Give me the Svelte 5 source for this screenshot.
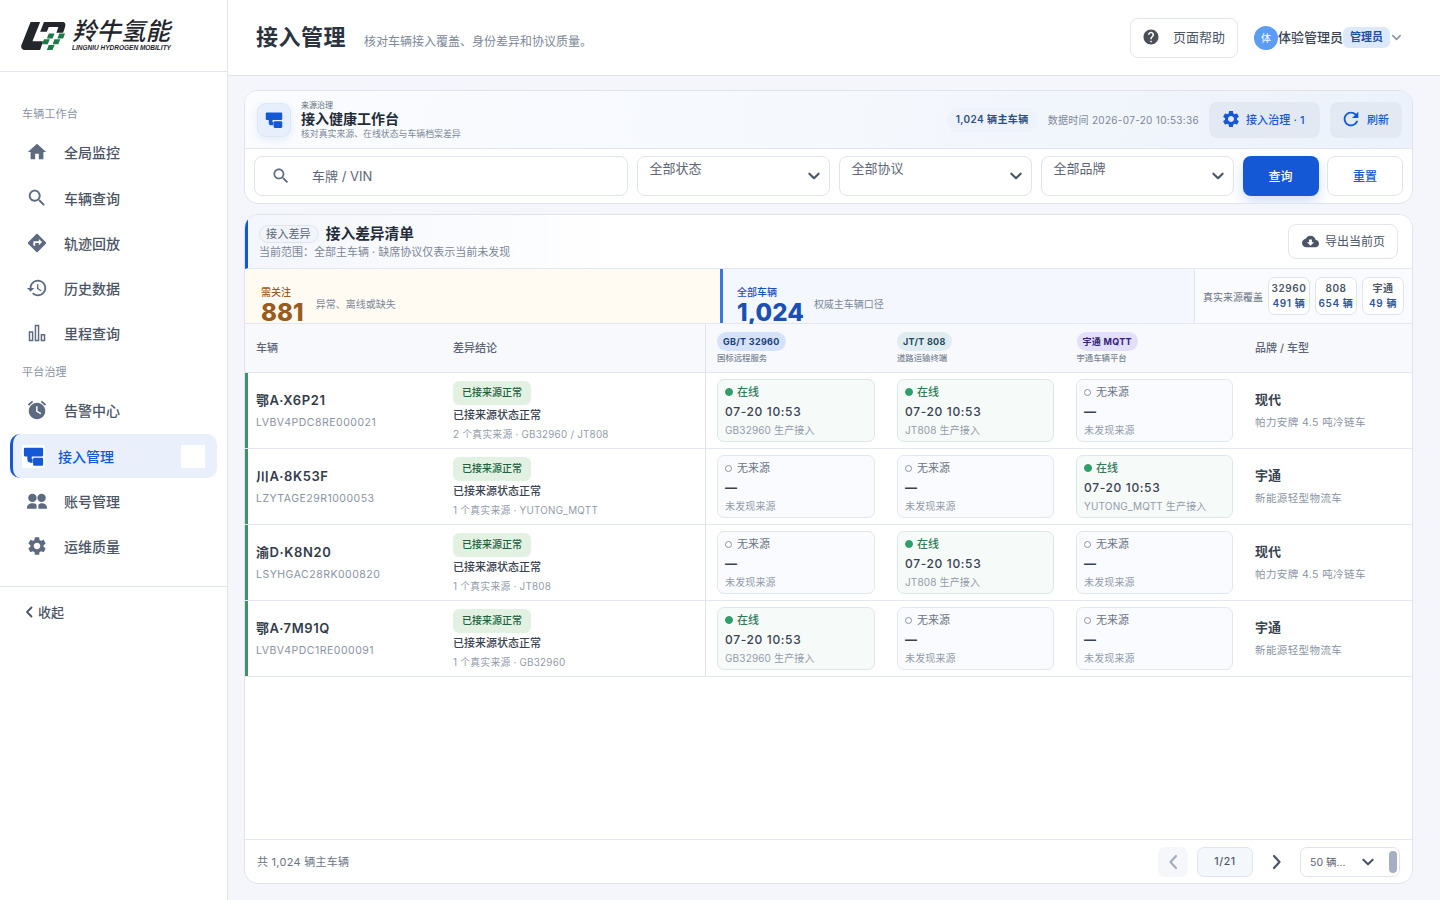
<script lang="ts">
  type Src = { on: boolean; sub: string };
  type Row = { plate: string; vin: string; meta: string; srcs: Src[]; brand: string; model: string };

  const icons: Record<string, string> = {
    home: 'M10 20v-6h4v6h5v-8h3L12 3 2 12h3v8z',
    search: 'M15.5 14h-.79l-.28-.27C15.41 12.59 16 11.11 16 9.5 16 5.91 13.09 3 9.5 3S3 5.91 3 9.5 5.91 16 9.5 16c1.61 0 3.09-.59 4.23-1.57l.27.28v.79l5 4.99L20.49 19l-4.99-5zm-6 0C7.01 14 5 11.99 5 9.5S7.01 5 9.5 5 14 7.01 14 9.5 11.99 14 9.5 14z',
    route: 'M21.71 11.29l-9-9c-.39-.39-1.02-.39-1.41 0l-9 9c-.39.39-.39 1.02 0 1.41l9 9c.39.39 1.02.39 1.41 0l9-9c.39-.38.39-1.01 0-1.41zM14 14.5V12h-4v3H8v-4c0-.55.45-1 1-1h5V7.5l3.5 3.5-3.5 3.5z',
    history: 'M13 3c-4.97 0-9 4.03-9 9H1l3.89 3.89.07.14L9 12H6c0-3.87 3.13-7 7-7s7 3.13 7 7-3.13 7-7 7c-1.93 0-3.68-.79-4.94-2.06l-1.42 1.42C8.27 19.99 10.51 21 13 21c4.97 0 9-4.03 9-9s-4.03-9-9-9zm-1 5v5l4.28 2.54.72-1.21-3.5-2.08V8H12z',
    bars: 'M3 10h5v11H3zM4.6 11.6v7.8h1.8v-7.8zM9.5 3h5v18h-5zM11.1 4.6v14.8h1.8V4.6zM16 13h5v8h-5zM17.6 14.6v4.8h1.8v-4.8z',
    alarm: 'M22 5.72l-4.6-3.86-1.29 1.53 4.6 3.86L22 5.72zM7.88 3.39L6.6 1.86 2 5.71l1.29 1.53 4.59-3.85zM12 4c-4.97 0-9 4.03-9 9s4.03 9 9 9 9-4.03 9-9-4.03-9-9-9zm3.9 12.7L11 13.8V8h1.6v5l4.1 2.4z',
    access: 'M2.5 2h19A1.5 1.5 0 0 1 23 3.5v7a1.5 1.5 0 0 1-1.500 1.500H10v2.500h1V19H8.500A3.500 3.500 0 0 1 5 15.500V12H2.500A1.500 1.500 0 0 1 1 10.500v-7A1.500 1.500 0 0 1 2.500 2zM13 13.500h8.500A1.500 1.500 0 0 1 23 15v6a1.500 1.500 0 0 1-1.500 1.500H13a1.500 1.500 0 0 1-1.500-1.500v-6a1.500 1.500 0 0 1 1.500-1.500z',
    group: 'M7 4a4.600 4.600 0 1 1 0 9.200A4.600 4.600 0 0 1 7 4zm10 0a4.600 4.600 0 1 1 0 9.200A4.600 4.600 0 0 1 17 4zM1 20c0-3.600 2.700-5.500 6-5.500 1.700 0 3.500.5 4.500 1.700V20.500H1.500A.5.5 0 0 1 1 20zm12.500.5v-4.300c1-1.200 2.700-1.700 3.500-1.700 3.300 0 6 1.900 6 5.500a.5.5 0 0 1-.5.5z',
    gear: 'M19.14 12.94c.04-.3.06-.61.06-.94 0-.32-.02-.64-.07-.94l2.03-1.58c.18-.14.23-.41.12-.61l-1.92-3.32c-.12-.22-.37-.29-.59-.22l-2.39.96c-.5-.38-1.03-.7-1.62-.94l-.36-2.54c-.04-.24-.24-.41-.48-.41h-3.84c-.24 0-.43.17-.47.41l-.36 2.54c-.59.24-1.13.57-1.62.94l-2.39-.96c-.22-.08-.47 0-.59.22L2.74 8.87c-.12.21-.08.47.12.61l2.03 1.58c-.05.3-.09.63-.09.94s.02.64.07.94l-2.03 1.58c-.18.14-.23.41-.12.61l1.92 3.32c.12.22.37.29.59.22l2.39-.96c.5.38 1.03.7 1.62.94l.36 2.54c.05.24.24.41.48.41h3.84c.24 0 .44-.17.47-.41l.36-2.54c.59-.24 1.13-.56 1.62-.94l2.39.96c.22.08.47 0 .59-.22l1.92-3.32c.12-.22.07-.47-.12-.61l-2.01-1.58zM12 15.6c-1.98 0-3.6-1.62-3.6-3.6s1.62-3.6 3.6-3.6 3.6 1.62 3.6 3.6-1.62 3.6-3.6 3.6z',
    help: 'M12 2C6.48 2 2 6.48 2 12s4.48 10 10 10 10-4.48 10-10S17.52 2 12 2zm1 17h-2v-2h2v2zm2.07-7.75l-.9.92C13.45 12.9 13 13.5 13 15h-2v-.5c0-1.1.45-2.1 1.17-2.83l1.24-1.26c.37-.36.59-.86.59-1.41 0-1.1-.9-2-2-2s-2 .9-2 2H8c0-2.21 1.79-4 4-4s4 1.79 4 4c0 .88-.36 1.68-.93 2.25z',
    refresh: 'M17.65 6.35C16.2 4.9 14.21 4 12 4c-4.42 0-7.99 3.58-7.99 8s3.57 8 7.99 8c3.73 0 6.84-2.55 7.73-6h-2.08c-.82 2.33-3.04 4-5.65 4-3.31 0-6-2.69-6-6s2.69-6 6-6c1.66 0 3.14.69 4.22 1.78L13 11h7V4l-2.35 2.35z',
    cloud: 'M19.35 10.04C18.67 6.59 15.64 4 12 4 9.11 4 6.6 5.64 5.35 8.04 2.34 8.36 0 10.91 0 14c0 3.31 2.69 6 6 6h13c2.76 0 5-2.24 5-5 0-2.64-2.05-4.78-4.65-4.96zM17 13l-5 5-5-5h3V9h4v4h3z',
  };

  const workbench = [
    { icon: 'home', label: '全局监控' },
    { icon: 'search', label: '车辆查询' },
    { icon: 'route', label: '轨迹回放' },
    { icon: 'history', label: '历史数据' },
    { icon: 'bars', label: '里程查询' },
  ];

  const platform = [
    { icon: 'alarm', label: '告警中心' },
    { icon: 'access', label: '接入管理', active: true },
    { icon: 'group', label: '账号管理' },
    { icon: 'gear', label: '运维质量' },
  ];

  const on = (sub: string): Src => ({ on: true, sub });
  const off: Src = { on: false, sub: '未发现来源' };

  const rows: Row[] = [
    { plate: '鄂A·X6P21', vin: 'LVBV4PDC8RE000021', meta: '2 个真实来源 · GB32960 / JT808', srcs: [on('GB32960 生产接入'), on('JT808 生产接入'), off], brand: '现代', model: '帕力安牌 4.5 吨冷链车' },
    { plate: '川A·8K53F', vin: 'LZYTAGE29R1000053', meta: '1 个真实来源 · YUTONG_MQTT', srcs: [off, off, on('YUTONG_MQTT 生产接入')], brand: '宇通', model: '新能源轻型物流车' },
    { plate: '渝D·K8N20', vin: 'LSYHGAC28RK000820', meta: '1 个真实来源 · JT808', srcs: [off, on('JT808 生产接入'), off], brand: '现代', model: '帕力安牌 4.5 吨冷链车' },
    { plate: '鄂A·7M91Q', vin: 'LVBV4PDC1RE000091', meta: '1 个真实来源 · GB32960', srcs: [on('GB32960 生产接入'), off, off], brand: '宇通', model: '新能源轻型物流车' },
  ];

  const filters = ['全部状态', '全部协议', '全部品牌'];

  const sources = [
    { tag: 'GB/T 32960', sub: '国标远程服务', cls: 'blue' },
    { tag: 'JT/T 808', sub: '道路运输终端', cls: 'teal' },
    { tag: '宇通 MQTT', sub: '宇通车辆平台', cls: 'purple' },
  ];

  const coverage = [
    { name: '32960', count: '491 辆' },
    { name: '808', count: '654 辆' },
    { name: '宇通', count: '49 辆' },
  ];
</script>

{#snippet icon(name: string, size: number)}
  <svg class="ic" width={size} height={size} viewBox="0 0 24 24" aria-hidden="true"><path fill="currentColor" fill-rule={name === 'bars' ? 'evenodd' : undefined} d={icons[name]} /></svg>
{/snippet}

{#snippet chevron(size: number)}
  <svg class="chev" width={size} height={size} viewBox="0 0 12 12" aria-hidden="true"><path d="M2 4l4 4 4-4" fill="none" stroke="currentColor" stroke-width="1.800" stroke-linecap="round" stroke-linejoin="round" /></svg>
{/snippet}

<div class="app">
  <aside class="sidebar">
    <div class="logo">
      <svg class="logo-mark" width="45" height="30" viewBox="0 0 47 31" aria-hidden="true">
        <path fill="#23262b" d="M10 1h10L12 21h11l-3 9H4c-3 0-4.500-2-3.500-5z" />
        <path fill="#23262b" d="M24 1h19c3 0 4 2 3 5l-2 6h-7l2-6H29l-2 5h-7z" />
        <path fill="#1d7a48" d="M29 13h6l-2 5h-6zM40 13h6l-2 5h-6zM24 19h6l-2 5h-6zM35 19h6l-2 5h-6zM29 25h6l-2 5h-6z" />
      </svg>
      <div class="logo-text">
        <div class="logo-cn">羚牛氢能</div>
        <div class="logo-en">LINGNIU HYDROGEN MOBILITY</div>
      </div>
    </div>

    <nav class="nav">
      <div class="nav-label">车辆工作台</div>
      {#each workbench as item}
        <div class="nav-item">{@render icon(item.icon, 22)}<span>{item.label}</span></div>
      {/each}
      <div class="nav-label second">平台治理</div>
      {#each platform as item}
        <div class="nav-item" class:active={item.active}>
          {#if item.active}
            <span class="active-icon">{@render icon(item.icon, 21)}</span>
          {:else}
            {@render icon(item.icon, 22)}
          {/if}
          <span>{item.label}</span>
          {#if item.active}<span class="active-box"></span>{/if}
        </div>
      {/each}
    </nav>

    <div class="collapse">
      <svg width="10" height="12" viewBox="0 0 10 12" aria-hidden="true"><path d="M7.500 1.500L3 6l4.500 4.500" fill="none" stroke="currentColor" stroke-width="1.800" stroke-linecap="round" stroke-linejoin="round" /></svg>
      <span>收起</span>
    </div>
  </aside>

  <div class="main">
    <header class="topbar">
      <h1>接入管理</h1>
      <p>核对车辆接入覆盖、身份差异和协议质量。</p>
      <button class="help" type="button">{@render icon('help', 18)}<span>页面帮助</span></button>
      <div class="user">
        <span class="avatar">体</span>
        <span class="user-name">体验管理员</span>
        <span class="role">管理员</span>
        {@render chevron(11)}
      </div>
    </header>

    <div class="content">
      <section class="card filter-card">
        <div class="work-head">
          <span class="work-icon">{@render icon('access', 18)}</span>
          <div class="work-titles">
            <div class="eyebrow">来源治理</div>
            <div class="work-title">接入健康工作台</div>
            <div class="work-sub">核对真实来源、在线状态与车辆档案差异</div>
          </div>
          <span class="total-pill">1,024 辆主车辆</span>
          <span class="data-time">数据时间 2026-07-20 10:53:36</span>
          <button class="soft wide" type="button">{@render icon('gear', 20)}<span>接入治理 · 1</span></button>
          <button class="soft narrow" type="button">{@render icon('refresh', 22)}<span>刷新</span></button>
        </div>
        <div class="filters">
          <div class="search">{@render icon('search', 20)}<span>车牌 / VIN</span></div>
          {#each filters as f}
            <div class="select"><span>{f}</span>{@render chevron(14)}</div>
          {/each}
          <button class="primary" type="button">查询</button>
          <button class="reset" type="button">重置</button>
        </div>
      </section>

      <section class="card list-card">
        <div class="list-head">
          <div class="list-titles">
            <div class="list-line">
              <span class="list-tag">接入差异</span>
              <span class="list-title">接入差异清单</span>
            </div>
            <div class="list-sub">当前范围：全部主车辆 · 缺席协议仅表示当前未发现</div>
          </div>
          <button class="export" type="button">{@render icon('cloud', 17)}<span>导出当前页</span></button>
        </div>

        <div class="stats">
          <div class="stat warn">
            <div>
              <div class="stat-label">需关注</div>
              <div class="stat-num">881</div>
            </div>
            <span class="stat-note">异常、离线或缺失</span>
          </div>
          <div class="stat info">
            <div>
              <div class="stat-label">全部车辆</div>
              <div class="stat-num">1,024</div>
            </div>
            <span class="stat-note">权威主车辆口径</span>
          </div>
          <div class="coverage">
            <span class="coverage-label">真实来源覆盖</span>
            {#each coverage as c}
              <div class="coverage-chip"><div>{c.name}</div><div class="count">{c.count}</div></div>
            {/each}
          </div>
        </div>

        <div class="table-row table-head">
          <div class="cell first">车辆</div>
          <div class="cell concl">差异结论</div>
          {#each sources as s}
            <div class="cell src">
              <span class="src-tag {s.cls}">{s.tag}</span>
              <div class="src-sub">{s.sub}</div>
            </div>
          {/each}
          <div class="cell brand-col">品牌 / 车型</div>
        </div>

        {#each rows as r}
          <div class="table-row body-row">
            <div class="cell first">
              <div class="plate">{r.plate}</div>
              <div class="vin">{r.vin}</div>
            </div>
            <div class="cell concl">
              <span class="ok-tag">已接来源正常</span>
              <div class="ok-text">已接来源状态正常</div>
              <div class="ok-meta">{r.meta}</div>
            </div>
            {#each r.srcs as s}
              <div class="cell src">
                <div class="src-box" class:on={s.on}>
                  <div class="state"><i class="dot"></i>{s.on ? '在线' : '无来源'}</div>
                  <div class="when">{s.on ? '07-20 10:53' : '—'}</div>
                  <div class="detail">{s.sub}</div>
                </div>
              </div>
            {/each}
            <div class="cell brand-col">
              <div class="brand">{r.brand}</div>
              <div class="model">{r.model}</div>
            </div>
          </div>
        {/each}

        <div class="spacer"></div>

        <div class="pager">
          <span class="pager-total">共 1,024 辆主车辆</span>
          <span class="page-prev"><svg width="12" height="16" viewBox="0 0 12 16" aria-hidden="true"><path d="M9 2L3.500 8 9 14" fill="none" stroke="currentColor" stroke-width="2.200" stroke-linecap="round" stroke-linejoin="round" /></svg></span>
          <span class="page-num">1/21</span>
          <span class="page-next"><svg width="12" height="16" viewBox="0 0 12 16" aria-hidden="true"><path d="M3 2l5.500 6L3 14" fill="none" stroke="currentColor" stroke-width="2.200" stroke-linecap="round" stroke-linejoin="round" /></svg></span>
          <div class="page-size"><span>50 辆...</span>{@render chevron(14)}<i class="page-bar"></i></div>
        </div>
      </section>
    </div>
  </div>
</div>

<style>
  :global(body) {
    margin: 0;
    background: #f4f6fb;
    font-family: Inter, "Noto Sans CJK SC", sans-serif;
    color: #2b3445;
  }

  .app {
    display: flex;
    height: 900px;
    overflow: hidden;
  }

  .ic { display: block; flex-shrink: 0; }
  .chev { display: block; flex-shrink: 0; color: #4b5565; }

  button { font-family: inherit; cursor: pointer; }

  /* ── Sidebar ── */
  .sidebar {
    width: 228px;
    flex-shrink: 0;
    box-sizing: border-box;
    background: #fff;
    border-right: 1px solid #e1e5ec;
    display: flex;
    flex-direction: column;
  }

  .logo {
    height: 72px;
    box-sizing: border-box;
    border-bottom: 1px solid #e1e5ec;
    display: flex;
    align-items: center;
    gap: 6px;
    padding: 2px 0 0 21px;
  }

  .logo-mark { margin-top: -1px; }

  .logo-cn {
    font-size: 24.500px;
    line-height: 25px;
    font-weight: 500;
    font-style: italic;
    color: #23262b;
    white-space: nowrap;
    margin-top: -2px;
  }

  .logo-en {
    font-family: "Liberation Sans", sans-serif;
    font-size: 6.500px;
    line-height: 8px;
    font-weight: 700;
    font-style: italic;
    color: #23262b;
    white-space: nowrap;
  }

  .nav {
    padding: 34px 10px 0 10px;
    height: 515px;
    box-sizing: border-box;
    border-bottom: 1px solid #e1e5ec;
  }

  .nav-label {
    font-size: 11px;
    line-height: 16px;
    color: #8a93a3;
    padding-left: 12px;
    margin-bottom: 8px;
    letter-spacing: 0.2px;
  }

  .nav-label.second { margin-top: 9px; margin-bottom: 8px; }

  .nav-item {
    height: 44px;
    margin-bottom: 1px;
    display: flex;
    align-items: center;
    gap: 16px;
    padding-left: 16px;
    font-size: 14px;
    font-weight: 500;
    color: #4b5565;
    border-radius: 10px;
    box-sizing: border-box;
  }

  .nav-label:first-child + .nav-item { margin-bottom: 2px; }

  .nav-item .ic { color: #5d6a80; }

  .nav-item.active {
    margin-top: 2px;
    background: #e9f0fb;
    color: #1558d6;
    border-left: 3px solid #1558d6;
    padding-left: 9px;
    gap: 13px;
  }

  .active-icon {
    width: 23px;
    height: 23px;
    background: #fff;
    display: flex;
    align-items: center;
    justify-content: center;
  }

  .nav-item.active .ic { color: #1558d6; }

  .active-box {
    width: 24px;
    height: 23px;
    background: #fff;
    margin-left: auto;
    margin-right: 12px;
  }

  .collapse {
    display: flex;
    align-items: center;
    gap: 4px;
    padding: 15px 0 0 24px;
    font-size: 13px;
    font-weight: 500;
    line-height: 20px;
    color: #4b5565;
  }

  /* ── Main ── */
  .main {
    flex: 1;
    min-width: 0;
    display: flex;
    flex-direction: column;
  }

  .topbar {
    height: 76px;
    flex-shrink: 0;
    box-sizing: border-box;
    background: #fff;
    border-bottom: 1px solid #e1e6ee;
    display: flex;
    align-items: center;
    padding: 0 38px 0 28px;
  }

  h1 {
    margin: 0 0 2px;
    font-size: 22px;
    line-height: 30px;
    font-weight: 600;
    letter-spacing: 0.5px;
    color: #2b3240;
  }

  .topbar p {
    margin: 9px auto 0 18px;
    font-size: 12px;
    line-height: 16px;
    color: #7d8797;
  }

  .help {
    width: 108px;
    height: 40px;
    background: #fff;
    border: 1px solid #e1e5ec;
    border-radius: 8px;
    display: flex;
    align-items: center;
    gap: 13px;
    padding: 0 0 2px 11px;
    font-size: 13px;
    color: #4b5565;
  }

  .help .ic { color: #4b5058; margin-top: 1px; }

  .user {
    display: flex;
    align-items: center;
    margin-left: 16px;
  }

  .avatar {
    width: 24px;
    height: 24px;
    border-radius: 50%;
    background: #5b9df0;
    color: #fff;
    font-size: 10px;
    display: flex;
    align-items: center;
    justify-content: center;
  }

  .user-name {
    font-size: 13px;
    font-weight: 500;
    color: #3a4352;
    padding-bottom: 2px;
  }

  .role {
    background: #dce9fb;
    color: #1f4f94;
    font-size: 11px;
    font-weight: 600;
    line-height: 21px;
    height: 21px;
    padding: 0 7px;
    border-radius: 6px;
  }

  .user .chev { color: #8d96a5; margin-left: 1px; }

  .content {
    padding: 14px 27px 16px 16px;
    display: flex;
    flex-direction: column;
    gap: 10px;
    flex: 1;
    min-height: 0;
  }

  .card {
    background: #fff;
    border: 1px solid #dfe4ec;
    border-radius: 14px;
    overflow: hidden;
  }

  /* ── Filter card ── */
  .work-head {
    height: 58px;
    box-sizing: border-box;
    border-bottom: 1px solid #e2e7ef;
    background: linear-gradient(100deg, #fafcff 0%, #f5f8fd 50%, #ecf2fb 100%);
    display: flex;
    align-items: center;
    padding: 0 10px 0 12px;
  }

  .work-icon {
    width: 34px;
    height: 34px;
    border-radius: 9px;
    background: #e7effc;
    border: 1px solid #dbe6f8;
    box-sizing: border-box;
    color: #1558d6;
    display: flex;
    align-items: center;
    justify-content: center;
    box-shadow: 0 3px 8px rgba(60, 100, 170, 0.1);
    flex-shrink: 0;
  }

  .work-titles { margin-left: 10px; margin-right: auto; }

  .eyebrow {
    font-size: 8px;
    line-height: 10px;
    color: #5f6a7c;
  }

  .work-title {
    font-size: 14px;
    font-weight: 600;
    line-height: 18px;
    color: #232b38;
  }

  .work-sub {
    font-size: 8.900px;
    line-height: 12px;
    color: #7d8797;
  }

  .total-pill {
    height: 24px;
    line-height: 23px;
    border-radius: 12px;
    background: #edf2fb;
    color: #2f4f80;
    font-size: 10px;
    font-weight: 600;
    padding: 0 9px;
    letter-spacing: 0.4px;
  }

  .data-time {
    margin-left: 10px;
    font-size: 10px;
    letter-spacing: 0.3px;
    color: #7d8797;
  }

  .soft {
    height: 36px;
    border: 0;
    border-radius: 8px;
    background: #e3e9f3;
    color: #1558d6;
    font-size: 11px;
    font-weight: 500;
    letter-spacing: 0.1px;
    display: flex;
    align-items: center;
    padding: 0;
  }

  .soft.wide { width: 111px; margin-left: 10px; gap: 5px; padding: 0 0 1px 12px; }
  .soft.narrow { width: 72px; margin-left: 10px; gap: 5px; padding: 0 0 1px 10px; }

  .filters {
    height: 54px;
    box-sizing: border-box;
    display: flex;
    align-items: center;
    gap: 8.500px;
    padding: 0 9px;
  }

  .search {
    width: 374px;
    height: 40px;
    box-sizing: border-box;
    border: 1px solid #dfe4ec;
    border-radius: 8px;
    display: flex;
    align-items: center;
    gap: 21px;
    padding: 0 0 2px 16px;
    font-size: 13px;
    color: #5d6675;
  }

  .search .ic { color: #5d6a80; margin-top: 2px; }

  .select {
    width: 193.500px;
    height: 40px;
    box-sizing: border-box;
    border: 1px solid #dfe4ec;
    border-radius: 8px;
    display: flex;
    justify-content: space-between;
    padding: 2px 8px 0 12px;
    font-size: 13px;
    line-height: 18px;
    color: #5d6675;
  }

  .select .chev { margin-top: 10px; }

  .primary {
    width: 76px;
    height: 40px;
    border: 0;
    border-radius: 8px;
    background: #1558d6;
    color: #fff;
    font-size: 12px;
    font-weight: 500;
    padding: 0 0 2px;
    box-shadow: 0 6px 14px rgba(21, 88, 214, 0.2);
  }

  .reset {
    width: 76px;
    height: 40px;
    background: #fff;
    border: 1px solid #dfe4ec;
    border-radius: 8px;
    color: #1558d6;
    font-size: 12px;
    font-weight: 500;
    padding: 0 0 2px;
  }

  /* ── List card ── */
  .list-card {
    flex: 1;
    min-height: 0;
    display: flex;
    flex-direction: column;
  }

  .list-head {
    height: 54px;
    flex-shrink: 0;
    box-sizing: border-box;
    border-left: 3px solid #1558d6;
    border-bottom: 1px solid #e2e7ef;
    background: linear-gradient(90deg, #f3f6fc 0%, #fff 32%);
    display: flex;
    align-items: center;
    justify-content: space-between;
    padding: 0 14px 0 11px;
  }

  .list-line { display: flex; align-items: center; gap: 7px; }

  .list-tag {
    height: 18px;
    line-height: 16px;
    box-sizing: border-box;
    border: 1px solid #dfe5ef;
    border-radius: 9px;
    background: #f1f4fa;
    padding: 0 7px 0 6px;
    font-size: 11.200px;
    color: #5d6675;
  }

  .list-title {
    font-size: 14.700px;
    font-weight: 600;
    line-height: 20px;
    color: #232b38;
    padding-top: 1px;
  }

  .list-sub {
    font-size: 11px;
    line-height: 16px;
    color: #7d8797;
    margin-top: 0;
  }

  .export {
    width: 110px;
    height: 35px;
    background: #fff;
    border: 1px solid #e1e5ec;
    border-radius: 8px;
    display: flex;
    align-items: center;
    gap: 6px;
    padding: 0 0 2px 13px;
    font-size: 12px;
    color: #4b5565;
  }

  .export .ic { margin-top: 1px; }

  .stats {
    height: 55px;
    flex-shrink: 0;
    box-sizing: border-box;
    border-bottom: 1px solid #e2e7ef;
    display: flex;
  }

  .stat {
    display: flex;
    align-items: flex-start;
    box-sizing: border-box;
  }

  .stat.warn {
    width: 475px;
    background: #fffbf3;
    padding: 17px 0 0 16px;
    gap: 12px;
  }

  .stat.info {
    width: 474px;
    background: #f4f8fe;
    border-left: 3px solid #3a76e0;
    padding: 17px 0 0 14px;
    gap: 10px;
  }

  .stat-label {
    font-size: 10px;
    line-height: 12px;
    font-weight: 500;
  }

  .warn .stat-label, .warn .stat-num { color: #9a5b1c; }
  .info .stat-label, .info .stat-num { color: #1a4fb4; }

  .stat-num {
    font-size: 24px;
    line-height: 22px;
    font-weight: 800;
    margin-top: 4px;
    letter-spacing: 0.1px;
  }

  .stat-note {
    font-size: 10px;
    line-height: 14px;
    color: #7d8797;
    margin-top: 11px;
  }

  .coverage {
    flex: 1;
    border-left: 1px solid #e2e7ef;
    background: #fafbfe;
    display: flex;
    align-items: center;
    gap: 5px;
    padding-left: 8px;
  }

  .coverage-label {
    font-size: 10px;
    color: #6b7585;
    white-space: nowrap;
  }

  .coverage-chip {
    width: 42px;
    height: 38px;
    box-sizing: border-box;
    background: #fff;
    border: 1px solid #dfe4ec;
    border-radius: 7px;
    text-align: center;
    font-size: 10px;
    line-height: 15px;
    font-weight: 600;
    letter-spacing: 0.6px;
    color: #4b5565;
    padding-top: 3px;
    white-space: nowrap;
  }

  .coverage-chip .count { color: #2f5597; }

  /* ── Table ── */
  .table-row {
    display: grid;
    grid-template-columns: 196px 265px 180px 179.500px 178px 1fr;
    flex-shrink: 0;
    border-bottom: 1px solid #e2e7ef;
    box-sizing: border-box;
  }

  .table-head {
    height: 49px;
    background: #f7f9fc;
    font-size: 11px;
    font-weight: 500;
    color: #5d6675;
  }

  .table-head .first,
  .table-head .concl,
  .table-head .brand-col { display: flex; align-items: center; padding-bottom: 3px; }

  .cell { padding: 0 12px; box-sizing: border-box; min-width: 0; }

  .table-head .first { padding-left: 11px; }
  .table-head .concl { padding-left: 12px; }
  .table-head .src { padding: 8px 0 0 11px; }

  .concl { border-right: 1px solid #dfe4ec; }

  .src-tag {
    display: inline-block;
    height: 19px;
    line-height: 19px;
    border-radius: 10px;
    padding: 0 6px;
    font-size: 9px;
    font-weight: 700;
    letter-spacing: 0.3px;
  }

  .src-tag.blue { background: #d5e3fa; color: #1f4079; }
  .src-tag.teal { background: #dfecf1; color: #24495a; }
  .src-tag.purple { background: #e3defa; color: #32207a; }

  .src-sub {
    font-size: 8.400px;
    line-height: 12px;
    color: #7d8797;
    margin-top: 1px;
  }

  .body-row { height: 76px; }

  .body-row .first {
    border-left: 3px solid #3f9268;
    padding: 17px 0 0 8px;
  }

  .plate {
    font-size: 13px;
    line-height: 20px;
    font-weight: 600;
    letter-spacing: 0.6px;
    color: #333c4b;
  }

  .vin {
    margin-top: 5px;
    font-size: 10.500px;
    line-height: 16px;
    letter-spacing: 0.5px;
    color: #8a93a3;
    white-space: nowrap;
  }

  .body-row .concl { padding-top: 7px; }

  .ok-tag {
    display: inline-block;
    height: 24px;
    line-height: 23px;
    border-radius: 6px;
    background: #e3f1e3;
    color: #22603c;
    font-size: 10px;
    font-weight: 500;
    padding: 0 9px;
  }

  .ok-text {
    font-size: 11px;
    line-height: 16px;
    font-weight: 500;
    color: #3a4352;
    margin-top: 2px;
  }

  .ok-meta {
    font-size: 9.800px;
    line-height: 14px;
    letter-spacing: 0.25px;
    color: #939cab;
    margin-top: 5px;
    white-space: nowrap;
  }

  .body-row .src { padding: 6px 11.500px 0 11px; }
  .body-row .src:nth-child(5) { padding: 6px 11px 0 10.500px; }

  .src-box {
    height: 63px;
    box-sizing: border-box;
    border: 1px solid #e2e6ef;
    border-radius: 7px;
    background: #fafbfe;
    padding: 4px 7px 0 7px;
    color: #6b7585;
  }

  .src-box.on { background: #f6faf9; border-color: #dde7e5; }

  .state {
    display: flex;
    align-items: center;
    gap: 5px;
    font-size: 11px;
    line-height: 16px;
    color: #6b7585;
  }

  .src-box.on .state { color: #2f7a56; font-weight: 500; }

  .dot {
    width: 7px;
    height: 7px;
    box-sizing: border-box;
    border-radius: 50%;
    border: 1px solid #8a93a3;
    background: #fff;
    flex-shrink: 0;
  }

  .src-box.on .dot { width: 8px; height: 8px; margin-right: -1px; background: #2f9e68; border-color: #2f9e68; }

  .when {
    font-size: 12px;
    line-height: 18px;
    font-weight: 500;
    letter-spacing: 0.65px;
    color: #3a4352;
    margin-top: 3px;
  }

  .src-box:not(.on) .when { font-weight: 700; }

  .detail {
    font-size: 10px;
    line-height: 14px;
    letter-spacing: 0.15px;
    color: #939cab;
    margin-top: 2px;
    white-space: nowrap;
  }

  .brand-col { padding-left: 11.500px; padding-right: 0; }
  .body-row .brand-col { padding-top: 17px; }

  .brand {
    font-size: 13px;
    line-height: 20px;
    font-weight: 600;
    color: #3a4352;
    margin-top: -1px;
  }

  .model {
    font-size: 10.500px;
    line-height: 16px;
    letter-spacing: 0.4px;
    color: #8a93a3;
    margin-top: 6px;
    white-space: nowrap;
  }

  .spacer { flex: 1; }

  /* ── Pager ── */
  .pager {
    height: 44px;
    flex-shrink: 0;
    box-sizing: border-box;
    border-top: 1px solid #e2e7ef;
    display: flex;
    align-items: center;
    padding: 0 12px 0 12px;
    font-size: 11px;
    color: #6b7585;
  }

  .pager-total { margin-right: auto; letter-spacing: 0.25px; padding-bottom: 2px; }

  .page-prev {
    width: 30px;
    height: 30px;
    border-radius: 7px;
    background: #f5f7fb;
    color: #a4adbb;
    display: flex;
    align-items: center;
    justify-content: center;
  }

  .page-num {
    width: 56px;
    height: 30px;
    box-sizing: border-box;
    margin-left: 9px;
    border: 1px solid #dfe5ee;
    border-radius: 7px;
    background: #f4f7fc;
    text-align: center;
    line-height: 28px;
    font-size: 10.500px;
    font-weight: 500;
    letter-spacing: 0.6px;
    color: #4b5565;
  }

  .page-next {
    width: 47px;
    color: #4b5565;
    display: flex;
    align-items: center;
    justify-content: center;
  }

  .page-size {
    width: 100px;
    height: 30px;
    box-sizing: border-box;
    border: 1px solid #dfe4ec;
    border-radius: 7px;
    display: flex;
    align-items: center;
    padding-left: 9px;
    font-size: 10.500px;
    color: #5d6675;
    position: relative;
  }

  .page-size span { width: 44px; white-space: nowrap; }
  .page-size .chev { margin-left: 7px; }

  .page-bar {
    position: absolute;
    right: 2px;
    top: 3px;
    width: 8px;
    height: 22px;
    border-radius: 4px;
    background: #a4b0c2;
  }
</style>
